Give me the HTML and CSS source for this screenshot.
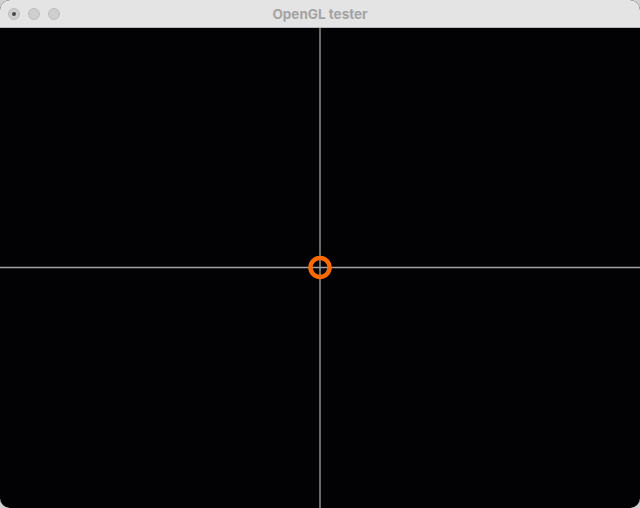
FILE: index.html
```html
<!DOCTYPE html>
<html>
<head>
<meta charset="utf-8">
<title>OpenGL tester</title>
<link rel="stylesheet" href="styles.css">
</head>
<body>
<div class="window">
  <div class="titlebar">
    <div class="lights">
      <span class="light"><span class="dot"></span></span>
      <span class="light"></span>
      <span class="light"></span>
    </div>
    <div class="title">OpenGL tester</div>
  </div>
  <div class="canvas">
    <svg width="640" height="480" viewBox="0 0 640 480">
      <line x1="320" y1="0" x2="320" y2="480" class="axis"/>
      <line x1="0" y1="239.5" x2="640" y2="239.5" class="axis"/>
      <circle cx="320" cy="239.5" r="9.5" class="ring"/>
    </svg>
  </div>
</div>
</body>
</html>
```
FILE: styles.css
```css
html, body {
  margin: 0;
  padding: 0;
  background: #cfcfcf;
}
.window {
  width: 640px;
  height: 508px;
  border-radius: 10px;
  overflow: hidden;
  display: flex;
  flex-direction: column;
  background: #020204;
}
.titlebar {
  height: 27px;
  flex: none;
  background: #e4e4e4;
  border-bottom: 1px solid #b8b8b8;
  display: flex;
  align-items: center;
  position: relative;
}
.lights {
  display: flex;
  gap: 8px;
  padding-left: 8px;
}
.light {
  width: 12px;
  height: 12px;
  box-sizing: border-box;
  border-radius: 50%;
  background: #cfcfcf;
  border: 1px solid #bdbdbd;
  display: flex;
  align-items: center;
  justify-content: center;
}
.dot {
  width: 4px;
  height: 4px;
  border-radius: 50%;
  background: #4a4a4a;
}
.title {
  position: absolute;
  left: 0;
  right: 0;
  top: 0;
  bottom: 0;
  display: flex;
  align-items: center;
  justify-content: center;
  font-family: "Inter", "Liberation Sans", sans-serif;
  font-weight: 700;
  font-size: 13.5px;
  color: #a3a3a3;
}
.canvas {
  flex: 1;
  display: flex;
}
.canvas svg {
  display: block;
}
.axis {
  stroke: #a2a2a2;
  stroke-width: 1.3;
}
.ring {
  fill: none;
  stroke: #ff6a00;
  stroke-width: 4.5;
}
```
